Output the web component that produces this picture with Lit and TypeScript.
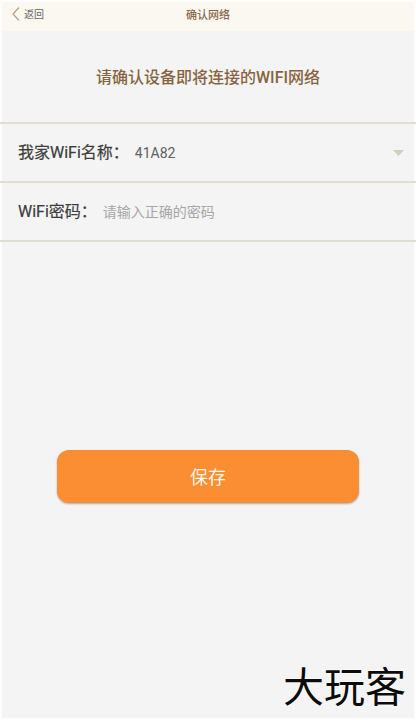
import { LitElement, html, css } from "lit";
import { customElement, state } from "lit/decorators.js";

@customElement("app-root")
export class AppRoot extends LitElement {
  @state() private network = "41A82";
  @state() private password = "";

  static styles = css`
    :host {
      display: flex;
      flex-direction: column;
      box-sizing: border-box;
      min-height: 100vh;
      background: #f4f4f4;
      box-shadow: inset 0 0 0 2px #fdfdfd;
      font-family: Roboto, "Noto Sans CJK SC", sans-serif;
      color: #484848;
    }
    * {
      box-sizing: border-box;
    }
    .bar {
      display: grid;
      grid-template-columns: 1fr auto 1fr;
      align-items: start;
      height: 29px;
      margin: 2px 2px 0;
      padding: 4px 8px;
      background: #fbf7f1;
    }
    .back {
      display: flex;
      align-items: center;
      gap: 4px;
      justify-self: start;
      padding: 0;
      border: 0;
      background: none;
      font: 10px/16px "Noto Sans CJK SC", sans-serif;
      color: #666;
      cursor: pointer;
    }
    .chevron {
      display: block;
      width: 10px;
      height: 16px;
      fill: none;
      stroke: #b9a489;
      stroke-width: 1.3;
    }
    .bar-title {
      margin: 0;
      font-size: 11px;
      line-height: 20px;
      font-weight: 500;
      color: #8a6b4a;
    }
    .prompt {
      margin: 35px 16px 32px;
      font-size: 16px;
      line-height: 24px;
      font-weight: 500;
      text-align: center;
      color: #87643f;
    }
    .fields {
      border-top: 2px solid #e2ddd1;
    }
    .row {
      display: flex;
      align-items: center;
      height: 59px;
      padding: 0 12px 0 18px;
      border-bottom: 2px solid #e2ddd1;
    }
    .label {
      flex: none;
      margin-right: 6px;
      font-size: 16px;
      line-height: 24px;
      color: #3c3c3c;
      -webkit-text-stroke: 0.2px #3c3c3c;
    }
    .control {
      flex: 1;
      min-width: 0;
      height: 32px;
      padding: 0;
      border: 0;
      outline: none;
      appearance: none;
      background: none;
      font-family: inherit;
      font-size: 14px;
      color: #606060;
    }
    .control::placeholder {
      color: #a6a6a6;
      opacity: 1;
    }
    .arrow {
      flex: none;
      width: 11px;
      height: 6px;
      fill: #d5cdbd;
      pointer-events: none;
    }
    .save {
      height: 53px;
      margin: 208px 57px 0;
      padding: 2px 0 0;
      border: 0;
      border-radius: 12px;
      background: #fb8d32;
      box-shadow: 0 1px 2px #a9a9b4;
      font-family: inherit;
      font-size: 18px;
      line-height: 24px;
      color: #fff4e6;
      cursor: pointer;
    }
    .brand {
      margin: auto 10px 12px auto;
      font-family: "Noto Sans CJK SC", sans-serif;
      font-size: 41px;
      line-height: 48px;
      color: #0c0c0c;
      text-shadow: 0 0 2px #fff, 0 0 2px #fff;
    }
  `;

  render() {
    return html`
      <header class="bar">
        <button class="back" type="button">
          <svg class="chevron" viewBox="0 0 10 16" aria-hidden="true">
            <path d="M9 1.5 3 8l6 6.5" />
          </svg>
          返回
        </button>
        <h1 class="bar-title">确认网络</h1>
      </header>
      <h2 class="prompt">请确认设备即将连接的WIFI网络</h2>
      <div class="fields">
        <div class="row">
          <label class="label" for="network">我家WiFi名称：</label>
          <select
            class="control"
            id="network"
            .value=${this.network}
            @change=${(e: Event) => (this.network = (e.target as HTMLSelectElement).value)}
          >
            <option value="41A82">41A82</option>
          </select>
          <svg class="arrow" viewBox="0 0 11 6" aria-hidden="true">
            <path d="M0 0h11L5.500 6z" />
          </svg>
        </div>
        <div class="row">
          <label class="label" for="password">WiFi密码：</label>
          <input
            class="control"
            id="password"
            type="password"
            placeholder="请输入正确的密码"
            .value=${this.password}
            @input=${(e: Event) => (this.password = (e.target as HTMLInputElement).value)}
          />
        </div>
      </div>
      <button class="save" type="button">保存</button>
      <div class="brand">大玩客</div>
    `;
  }
}
